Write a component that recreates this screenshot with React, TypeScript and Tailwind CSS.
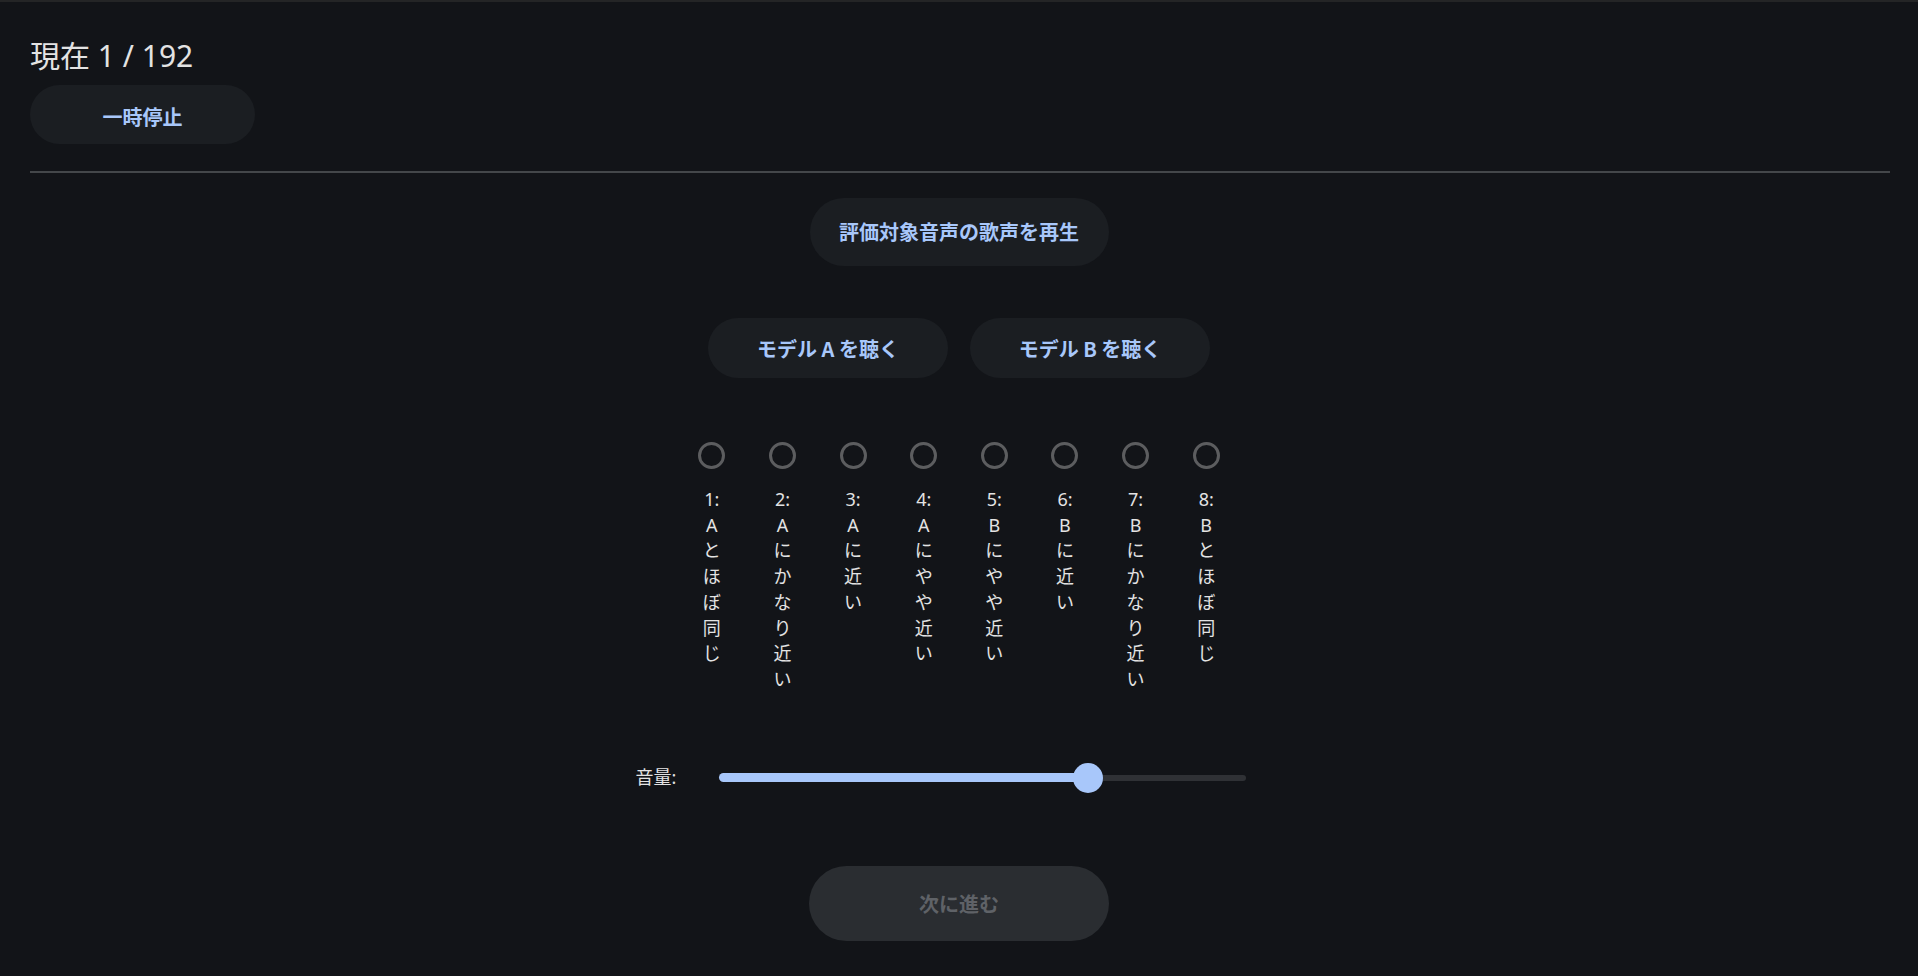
import { useState } from 'react';

const options = [
  '1: Aとほぼ同じ',
  '2: Aにかなり近い',
  '3: Aに近い',
  '4: Aにやや近い',
  '5: Bにやや近い',
  '6: Bに近い',
  '7: Bにかなり近い',
  '8: Bとほぼ同じ',
];

const font = 'font-["Noto_Sans","Noto_Sans_CJK_JP",sans-serif]';
const btnFont = 'font-["Noto_Sans_CJK_JP","Noto_Sans",sans-serif]';

export default function App() {
  const [selected, setSelected] = useState<number | null>(null);
  const volume = 70;

  return (
    <div className={`min-h-[976px] bg-[#121418] border-t-2 border-[#242526] ${font}`}>
      {/* Header */}
      <div className="pl-[30px] pr-[28px]">
        <h2 className="pt-[31px] text-[30px] leading-[45px] text-[#e3e3e3]">現在 1 / 192</h2>
        <button
          className={`mt-[7px] h-[59px] w-[225px] rounded-full bg-[#1b1e22] pt-[4px] text-[20px] font-bold text-[#a8c7fa] ${btnFont}`}
        >
          一時停止
        </button>
        <div className="mt-[27px] h-[2px] bg-[#44474a]" />
      </div>

      {/* Main */}
      <div className="flex flex-col items-center">
        <button
          className={`mt-[25px] h-[68px] w-[299px] rounded-full bg-[#1b1e22] text-[20px] font-bold text-[#a8c7fa] ${btnFont}`}
        >
          評価対象音声の歌声を再生
        </button>

        <div className="mt-[52px] flex gap-[22px]">
          <button
            className={`h-[60px] w-[240px] rounded-full bg-[#1b1e22] pt-[2px] text-[20px] font-bold text-[#a8c7fa] ${btnFont}`}
          >
            モデル A を聴く
          </button>
          <button
            className={`h-[60px] w-[240px] rounded-full bg-[#1b1e22] pt-[2px] text-[20px] font-bold text-[#a8c7fa] ${btnFont}`}
          >
            モデル B を聴く
          </button>
        </div>

        <div className="mt-[64px] grid w-[565px] grid-cols-8">
          {options.map((label, i) => (
            <label key={i} className="flex cursor-pointer flex-col items-center" onClick={() => setSelected(i)}>
              <span
                className={`flex h-[27px] w-[27px] items-center justify-center rounded-full border-[3px] ${
                  selected === i ? 'border-[#a8c7fa]' : 'border-[#5c5d5f]'
                }`}
              >
                {selected === i && <span className="h-[12px] w-[12px] rounded-full bg-[#a8c7fa]" />}
              </span>
              <span className="mt-[18px] w-[18px] text-center text-[18px] leading-[25.7px] text-[#e3e3e3]">
                {label}
              </span>
            </label>
          ))}
        </div>

        {/* Volume */}
        <div className="mt-[70px] flex h-[30px] items-center pr-[36px]">
          <span className="text-[18px] text-[#e3e3e3]">音量:</span>
          <div className="relative ml-[43px] flex h-[30px] w-[527px] items-center">
            <div className="h-[9px] w-[70%] rounded-l-full bg-[#a8c7fa]" />
            <div className="h-[6px] flex-1 rounded-r-full bg-[#2f3135]" />
            <div
              className="absolute top-0 h-[30px] w-[30px] rounded-full bg-[#a8c7fa]"
              style={{ left: `calc(${volume}% - 15px)` }}
            />
          </div>
        </div>

        <button
          disabled
          className={`mt-[73px] h-[75px] w-[300px] rounded-full bg-[#2a2d31] pt-[2px] text-[20px] font-bold text-[#5f6267] ${btnFont}`}
        >
          次に進む
        </button>
      </div>
    </div>
  );
}
